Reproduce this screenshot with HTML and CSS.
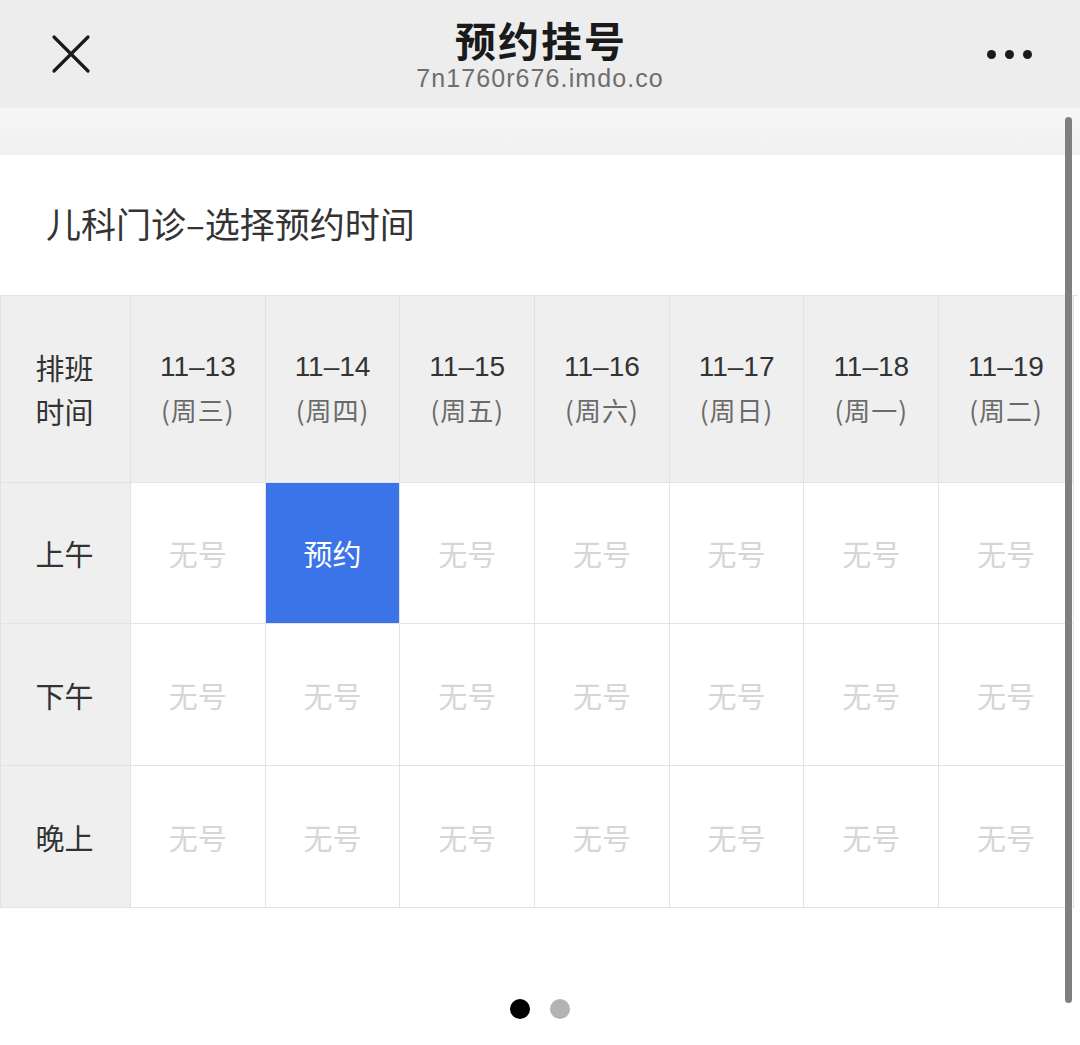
FILE: index.html
```html
<!DOCTYPE html>
<html lang="zh-CN">
<head>
<meta charset="utf-8">
<title>预约挂号</title>
<link rel="stylesheet" href="styles.css">
</head>
<body>
<div class="page">
  <header class="navbar">
    <div class="nav-close">
      <svg width="40" height="40" viewBox="0 0 40 40"><path d="M3 3 L37 37 M37 3 L3 37" stroke="#1a1a1a" stroke-width="3.2" stroke-linecap="round"/></svg>
    </div>
    <div class="nav-center">
      <div class="nav-title">预约挂号</div>
      <div class="nav-url">7n1760r676.imdo.co</div>
    </div>
    <div class="nav-more">
      <span class="dot"></span><span class="dot"></span><span class="dot"></span>
    </div>
  </header>
  <div class="band"></div>
  <main class="content">
    <h1 class="heading">儿科门诊–选择预约时间</h1>
    <div class="schedule">
      <div class="cell head first"><span class="dark">排班<br>时间</span></div>
      <div class="cell head"><span class="date">11–13</span><span class="week">(周三)</span></div>
      <div class="cell head"><span class="date">11–14</span><span class="week">(周四)</span></div>
      <div class="cell head"><span class="date">11–15</span><span class="week">(周五)</span></div>
      <div class="cell head"><span class="date">11–16</span><span class="week">(周六)</span></div>
      <div class="cell head"><span class="date">11–17</span><span class="week">(周日)</span></div>
      <div class="cell head"><span class="date">11–18</span><span class="week">(周一)</span></div>
      <div class="cell head"><span class="date">11–19</span><span class="week">(周二)</span></div>

      <div class="cell first">上午</div>
      <div class="cell none">无号</div>
      <div class="cell book">预约</div>
      <div class="cell none">无号</div>
      <div class="cell none">无号</div>
      <div class="cell none">无号</div>
      <div class="cell none">无号</div>
      <div class="cell none">无号</div>

      <div class="cell first">下午</div>
      <div class="cell none">无号</div>
      <div class="cell none">无号</div>
      <div class="cell none">无号</div>
      <div class="cell none">无号</div>
      <div class="cell none">无号</div>
      <div class="cell none">无号</div>
      <div class="cell none">无号</div>

      <div class="cell first">晚上</div>
      <div class="cell none">无号</div>
      <div class="cell none">无号</div>
      <div class="cell none">无号</div>
      <div class="cell none">无号</div>
      <div class="cell none">无号</div>
      <div class="cell none">无号</div>
      <div class="cell none">无号</div>
    </div>
    <div class="pager">
      <span class="pdot active"></span>
      <span class="pdot"></span>
    </div>
  </main>
  <div class="scrollbar"></div>
</div>
</body>
</html>
```
FILE: styles.css
```css
* { box-sizing: border-box; }
html, body {
  margin: 0;
  padding: 0;
  background: #ffffff;
  overflow: hidden;
}
body {
  font-family: "Liberation Sans", "Noto Sans CJK SC", sans-serif;
  color: #333333;
}
.page {
  position: relative;
  width: 1080px;
  height: 1045px;
  overflow: hidden;
}
.navbar {
  height: 108px;
  background: #ededed;
  display: flex;
  align-items: flex-start;
  justify-content: space-between;
}
.nav-close {
  width: 160px;
  padding: 34px 0 0 51px;
  display: flex;
}
.nav-center {
  flex: 1;
  display: flex;
  flex-direction: column;
  align-items: center;
  padding-top: 16px;
}
.nav-title {
  font-family: "Noto Sans CJK SC", sans-serif;
  font-weight: 700;
  font-size: 41px;
  line-height: 46px;
  color: #1a1a1a;
  letter-spacing: 2px;
  padding-left: 2px;
}
.nav-url {
  font-family: "Liberation Sans", sans-serif;
  font-size: 25px;
  line-height: 28px;
  color: #6e6e6e;
  margin-top: 2px;
  letter-spacing: 1.1px;
}
.nav-more {
  width: 160px;
  display: flex;
  justify-content: flex-end;
  gap: 9px;
  padding: 50px 48px 0 0;
}
.dot {
  width: 9px;
  height: 9px;
  border-radius: 50%;
  background: #1a1a1a;
}
.band {
  height: 47px;
  background: linear-gradient(#f6f6f6, #f1f1f1);
}
.content {
  background: #ffffff;
}
.heading {
  margin: 0;
  height: 140px;
  display: flex;
  align-items: center;
  padding-left: 46px;
  padding-bottom: 6px;
  font-family: "Noto Sans CJK SC", sans-serif;
  font-weight: 400;
  font-size: 35px;
  color: #333333;
}
.schedule {
  display: grid;
  grid-template-columns: 130px repeat(7, 134.7px);
  grid-template-rows: 187px 141px 142px 142px;
  width: 1078px;
  border-top: 1px solid #e3e3e3;
  border-left: 1px solid #e3e3e3;
}
.cell {
  border-right: 1px solid #e3e3e3;
  border-bottom: 1px solid #e3e3e3;
  display: flex;
  flex-direction: column;
  align-items: center;
  justify-content: center;
  font-family: "Noto Sans CJK SC", sans-serif;
  font-size: 29px;
  line-height: 44px;
}
.head {
  background: #efefef;
  padding-top: 0;
}
.first {
  background: #efefef;
  color: #333333;
  padding-right: 2px;
}
.dark { color: #333333; }
.date {
  font-family: "Liberation Sans", "Noto Sans CJK SC", sans-serif;
  font-size: 28px;
  color: #333333;
  line-height: 42px;
}
.week {
  font-size: 26px;
  color: #6a6a6a;
  line-height: 44px;
  letter-spacing: 1px;
}
.none {
  color: #d6d6d6;
  background: #ffffff;
}
.book {
  background: #3b73e8;
  color: #ffffff;
}
.pager {
  display: flex;
  justify-content: center;
  gap: 20px;
  padding: 91px 0 0 0;
  margin-left: -1px;
}
.pdot {
  width: 20px;
  height: 20px;
  border-radius: 50%;
  background: #b3b3b3;
}
.pdot.active { background: #000000; }
.scrollbar {
  position: absolute;
  left: 1065px;
  top: 117px;
  width: 7px;
  height: 886px;
  border-radius: 4px;
  background: #7f7f7f;
}
```
